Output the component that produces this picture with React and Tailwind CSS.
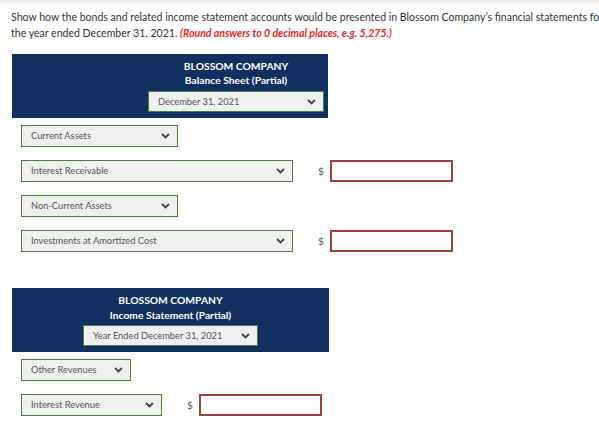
import React from "react";

const Chevron = () => (
  <svg width="9" height="6" viewBox="0 0 9 6" className="shrink-0">
    <path d="M1 1 L4.5 4.5 L8 1" fill="none" stroke="#444" strokeWidth="1.8" />
  </svg>
);

const Select = ({ label, width }) => (
  <div
    className="flex h-[22px] items-center justify-between border border-[#4e7d3a] bg-[#efefef] pl-[9px] pr-[7px] text-[9.3px] text-[#555]"
    style={{ width }}
  >
    <span>{label}</span>
    <Chevron />
  </div>
);

const Amount = () => (
  <div className="flex items-center">
    <span className="mr-[6px] text-[10px] text-[#555]">$</span>
    <div className="h-[22px] w-[123px] border-2 border-[#a0403c] bg-white" />
  </div>
);

const App = () => {
  return (
    <div className="min-h-[444px] w-[599px] overflow-hidden bg-white font-['Lato','Open_Sans',sans-serif]">
      <div className="h-[6px] bg-linear-to-b from-[#e6e6e6] to-white" />
      <p className="ml-[11px] mt-[3px] whitespace-nowrap text-[10.55px] leading-[16px] text-[#333]">
        Show how the bonds and related income statement accounts would be presented in Blossom Company’s financial statements for
        <br />
        the year ended December 31, 2021.{" "}
        <em className="font-bold text-[#e8281d]">(Round answers to 0 decimal places, e.g. 5,275.)</em>
      </p>

      <div className="ml-[12px] mt-[13px] flex h-[64px] w-[316px] justify-end bg-[#12305f] pr-[4px] pt-[5px]">
        <div className="flex w-[176px] flex-col items-center">
          <div className="text-[10.3px] font-bold leading-[14px] text-white">BLOSSOM COMPANY</div>
          <div className="text-[10.3px] font-bold leading-[14px] text-white">Balance Sheet (Partial)</div>
          <div className="mt-[4px] flex h-[21px] w-[176px] items-center justify-between border border-[#4e7d3a] bg-[#efefef] pl-[9px] pr-[7px] text-[9.3px] text-[#555]">
            <span>December 31, 2021</span>
            <Chevron />
          </div>
        </div>
      </div>

      <div className="ml-[21px] mt-[7px] flex flex-col gap-[13px]">
        <Select label="Current Assets" width={157} />
        <div className="flex items-center gap-[25px]">
          <Select label="Interest Receivable" width={272} />
          <Amount />
        </div>
        <Select label="Non-Current Assets" width={157} />
        <div className="flex items-center gap-[25px]">
          <Select label="Investments at Amortized Cost" width={272} />
          <Amount />
        </div>
      </div>

      <div className="ml-[12px] mt-[36px] flex h-[64px] w-[317px] flex-col items-center bg-[#12305f] pt-[5px]">
        <div className="text-[10.3px] font-bold leading-[15px] text-white">BLOSSOM COMPANY</div>
        <div className="text-[10.3px] font-bold leading-[15px] text-white">Income Statement (Partial)</div>
        <div className="mt-[2px] flex h-[21px] w-[175px] items-center justify-between border border-[#4e7d3a] bg-[#efefef] pl-[9px] pr-[7px] text-[9.3px] text-[#555]">
          <span>Year Ended December 31, 2021</span>
          <Chevron />
        </div>
      </div>

      <div className="ml-[21px] mt-[7px] flex flex-col gap-[13px]">
        <Select label="Other Revenues" width={110} />
        <div className="flex items-center gap-[25px]">
          <Select label="Interest Revenue" width={141} />
          <Amount />
        </div>
      </div>
    </div>
  );
};

export default App;
